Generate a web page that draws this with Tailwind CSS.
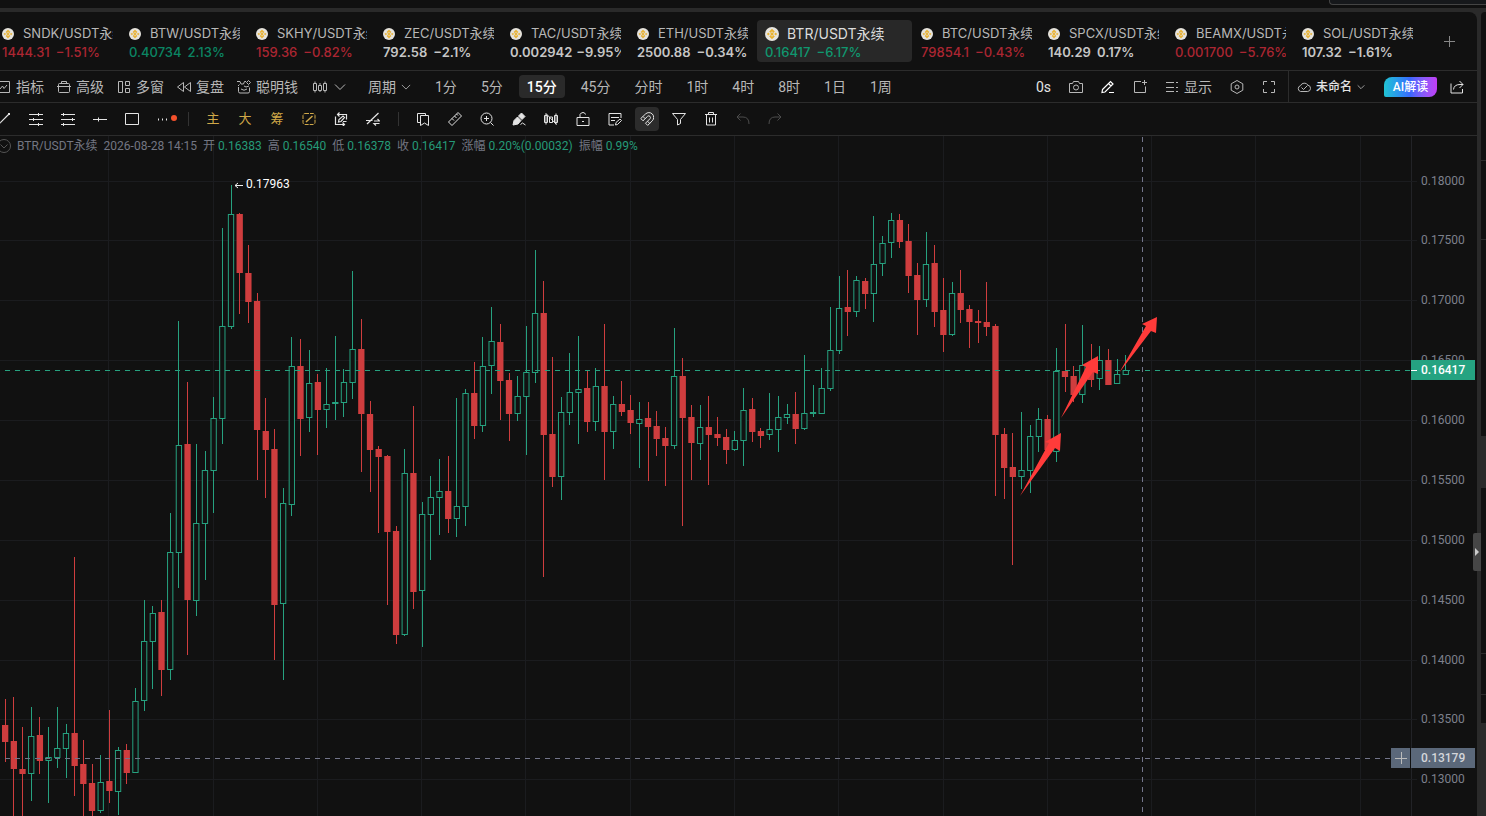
<!DOCTYPE html>
<html lang="zh-CN">
<head>
    <meta charset="UTF-8">
    <meta name="viewport" content="width=device-width, initial-scale=1.0">
    <title>BTR/USDT永续</title>
    <script src="https://cdn.jsdelivr.net/npm/@tailwindcss/browser@4"></script>
</head>
<body class="bg-[#2a2a2a] h-screen overflow-hidden flex flex-col font-['Roboto','Noto_Sans_CJK_SC',sans-serif] text-[#b8b8b8]">
    <svg class="hidden">
        <symbol id="coin" viewBox="0 0 14 14">
            <circle cx="7" cy="7" r="7" fill="#e6e4de"/>
            <path d="M7 2 9.600 4.600 8.500 5.700 7 4.200 5.500 5.700 4.400 4.600ZM7 12 9.600 9.400 8.500 8.300 7 9.800 5.500 8.300 4.400 9.400ZM2 7 3.300 5.700 4.600 7 3.300 8.300ZM12 7 10.700 5.700 9.400 7 10.700 8.300ZM7 5.300 8.700 7 7 8.700 5.300 7Z" fill="#e9b02a" stroke="#e9b02a" stroke-width=".3"/>
        </symbol>
        <symbol id="chevron" viewBox="0 0 12 12"><path d="M1 3.500 6 8.500 11 3.500" fill="none" stroke="currentColor"/></symbol>
    </svg>

    <!-- Window strip -->
    <div class="h-2 shrink-0 bg-[#101010] flex justify-end">
        <div class="w-[157px] h-[5px] bg-[#16181b] border-l border-b border-[#444] rounded-bl-sm"></div>
    </div>

    <div class="flex-1 min-h-0 pt-1 flex gap-1 relative">
        <main class="flex-1 min-w-0 bg-[#111] rounded-tr-lg flex flex-col overflow-hidden">
            <!-- Symbol tabs -->
            <nav class="h-[59px] shrink-0 border-b border-[#2c2c2c] flex items-center -ml-1.5 font-['Inter','Noto_Sans_CJK_SC',sans-serif] text-[13px] leading-[19px] whitespace-nowrap">
                <a href="#" class="w-[127px] shrink-0 px-2 pt-1"><span class="block overflow-hidden"><span class="flex items-center gap-[9px]"><svg class="size-3 shrink-0"><use href="#coin"/></svg>SNDK/USDT永续</span><span class="flex gap-1.5 font-medium text-[#ab2632]"><span>1444.31</span><span>−1.51%</span></span></span></a>
                <a href="#" class="w-[127px] shrink-0 px-2 pt-1"><span class="block overflow-hidden"><span class="flex items-center gap-[9px]"><svg class="size-3 shrink-0"><use href="#coin"/></svg>BTW/USDT永续</span><span class="flex gap-1.5 font-medium text-[#0b8563]"><span>0.40734</span><span>2.13%</span></span></span></a>
                <a href="#" class="w-[127px] shrink-0 px-2 pt-1"><span class="block overflow-hidden"><span class="flex items-center gap-[9px]"><svg class="size-3 shrink-0"><use href="#coin"/></svg>SKHY/USDT永续</span><span class="flex gap-1.5 font-medium text-[#ab2632]"><span>159.36</span><span>−0.82%</span></span></span></a>
                <a href="#" class="w-[127px] shrink-0 px-2 pt-1"><span class="block overflow-hidden"><span class="flex items-center gap-[9px]"><svg class="size-3 shrink-0"><use href="#coin"/></svg>ZEC/USDT永续</span><span class="flex gap-1.5 font-semibold text-[#c6c6c6]"><span>792.58</span><span>−2.1%</span></span></span></a>
                <a href="#" class="w-[127px] shrink-0 px-2 pt-1"><span class="block overflow-hidden"><span class="flex items-center gap-[9px]"><svg class="size-3 shrink-0"><use href="#coin"/></svg>TAC/USDT永续</span><span class="flex gap-1 font-semibold text-[#c6c6c6]"><span>0.002942</span><span>−9.95%</span></span></span></a>
                <a href="#" class="w-[127px] shrink-0 px-2 pt-1"><span class="block overflow-hidden"><span class="flex items-center gap-[9px]"><svg class="size-3 shrink-0"><use href="#coin"/></svg>ETH/USDT永续</span><span class="flex gap-1.5 font-semibold text-[#c6c6c6]"><span>2500.88</span><span>−0.34%</span></span></span></a>
                <a href="#" aria-current="page" class="w-[155px] h-[42px] mx-px shrink-0 px-2 rounded bg-[#282828] pt-1"><span class="flex items-center gap-2 text-sm leading-[19px] text-[#dcdcdc]"><svg class="size-3.5 shrink-0"><use href="#coin"/></svg>BTR/USDT永续</span><span class="flex gap-1.5 font-medium text-[#10976f]"><span>0.16417</span><span>−6.17%</span></span></a>
                <a href="#" class="w-[127px] shrink-0 px-2 pt-1"><span class="block overflow-hidden"><span class="flex items-center gap-[9px]"><svg class="size-3 shrink-0"><use href="#coin"/></svg>BTC/USDT永续</span><span class="flex gap-1.5 font-medium text-[#ab2632]"><span>79854.1</span><span>−0.43%</span></span></span></a>
                <a href="#" class="w-[127px] shrink-0 px-2 pt-1"><span class="block overflow-hidden"><span class="flex items-center gap-[9px]"><svg class="size-3 shrink-0"><use href="#coin"/></svg>SPCX/USDT永续</span><span class="flex gap-1.5 font-semibold text-[#c6c6c6]"><span>140.29</span><span>0.17%</span></span></span></a>
                <a href="#" class="w-[127px] shrink-0 px-2 pt-1"><span class="block overflow-hidden"><span class="flex items-center gap-[9px]"><svg class="size-3 shrink-0"><use href="#coin"/></svg>BEAMX/USDT永续</span><span class="flex gap-1.5 font-medium text-[#ab2632]"><span>0.001700</span><span>−5.76%</span></span></span></a>
                <a href="#" class="w-[127px] shrink-0 px-2 pt-1"><span class="block overflow-hidden"><span class="flex items-center gap-[9px]"><svg class="size-3 shrink-0"><use href="#coin"/></svg>SOL/USDT永续</span><span class="flex gap-1.5 font-semibold text-[#c6c6c6]"><span>107.32</span><span>−1.61%</span></span></span></a>
                <button class="ml-auto mr-[22px] size-[11px]" aria-label="添加"><svg class="size-[11px]" viewBox="0 0 11 11"><path d="M5.5 0v11M0 5.500h11" stroke="#888"/></svg></button>
            </nav>

            <!-- Chart toolbar -->
            <div class="h-8 shrink-0 border-b border-[#2c2c2c] flex items-center text-sm whitespace-nowrap">
                <div class="flex items-center gap-[13px] -ml-[3px]">
                    <button class="flex items-center gap-[5px]"><svg class="size-3.5" viewBox="0 0 14 14" fill="none" stroke="currentColor"><path d="M.5 1.500h12v11H.5ZM3 9l2.500-3 1.500 2.500L10 5"/></svg>指标</button>
                    <button class="flex items-center gap-[5px]"><svg class="size-3.5" viewBox="0 0 14 14" fill="none" stroke="currentColor"><path d="M2.500 3.500h9q1 0 1 1v7q0 1-1 1h-9q-1 0-1-1v-7q0-1 1-1ZM4.500 3.500v-2h5v2M0 6.500h14"/></svg>高级</button>
                    <button class="flex items-center gap-[5px]"><svg class="size-3.5" viewBox="0 0 14 14" fill="none" stroke="currentColor"><path d="M1.500 1.500h4v11h-4ZM8.500 1.500h4v4h-4ZM8.500 8.500h4v4h-4Z"/></svg>多窗</button>
                    <button class="flex items-center gap-[5px]"><svg class="size-3.5" viewBox="0 0 14 14" fill="none" stroke="currentColor"><path d="M6.500 2.500v9L.5 7ZM13.500 2.500v9L7.500 7Z"/></svg>复盘</button>
                    <button class="flex items-center gap-[5px]"><svg class="size-3.5" viewBox="0 0 14 14" fill="none" stroke="currentColor"><path d="M1.500 7v4.500q0 1.500 1.500 1.500h8q1.500 0 1.500-1.500V7.500M0 1.500h3l1 2.500h2.500l1-2.500H9M11.500.500 13.500 2.500 11.500 4.500 9.500 2.500ZM1 6l1.500-1.500M7 6l2 1 3-1M4 9q3 2.500 6 0"/></svg>聪明钱</button>
                    <button class="flex items-center gap-[7px] pl-0.5" aria-label="K线类型"><svg class="size-3.5" viewBox="0 0 14 14" fill="none" stroke="currentColor"><path d="M.5 3.500h3v7h-3ZM5.500 5.500h3v5h-3ZM10.500 3.500h3v7h-3ZM2 1.500v2M2 10.500v2M7 3v2.500M7 10.500V12M12 1.500v2M12 10.500v2"/></svg><svg class="size-3"><use href="#chevron"/></svg></button>
                </div>
                <div class="flex items-center gap-2 ml-3.5">
                    <button class="flex items-center gap-[5px] px-2">周期<svg class="size-2.5"><use href="#chevron"/></svg></button>
                    <button class="px-2">1分</button>
                    <button class="px-2">5分</button>
                    <button class="px-2 h-[23px] rounded bg-[#2a2a2a] text-white font-medium">15分</button>
                    <button class="px-2">45分</button>
                    <button class="px-2">分时</button>
                    <button class="px-2">1时</button>
                    <button class="px-2">4时</button>
                    <button class="px-2">8时</button>
                    <button class="px-2">1日</button>
                    <button class="px-2">1周</button>
                </div>
                <div class="ml-auto h-full flex items-center gap-[18px] pr-3 border-r border-[#2c2c2c]">
                    <span class="text-[#e4e4e4]">0s</span>
                    <button aria-label="截图"><svg class="size-3.5 block" viewBox="0 0 14 14" fill="none" stroke="currentColor"><path d="M.5 3.500h3l1-2h5l1 2h3v9H.5Z"/><circle cx="7" cy="7.500" r="2.500"/></svg></button>
                    <button aria-label="画线" class="text-white"><svg class="size-3.5 block" viewBox="0 0 14 14" fill="none" stroke="currentColor" stroke-width="1.200"><path d="M1.500 9.500 9.500 1.500l2.500 2.500-8 8-3 .5ZM7.500 3.500 10 6M8 12.500h5"/></svg></button>
                    <button aria-label="新建"><svg class="size-3.5 block" viewBox="0 0 14 14" fill="none" stroke="currentColor"><path d="M8 1.500H1.500v11h11V6.500M11.500 0v5M9 2.500h5"/></svg></button>
                    <button class="flex items-center gap-[5px]"><svg class="size-3.5" viewBox="0 0 14 14" fill="none" stroke="currentColor"><path d="M1 2.500h8M1 7.500h8M1 11.500h8M11 2.500h2M11 7.500h2M11 11.500h2"/></svg>显示</button>
                    <button aria-label="设置"><svg class="size-3.5 block" viewBox="0 0 14 14" fill="none" stroke="currentColor"><path d="M7 .5 12.800 3.800v6.400L7 13.500 1.200 10.200V3.800Z"/><circle cx="7" cy="7" r="2"/></svg></button>
                    <button aria-label="全屏"><svg class="size-3.5 block" viewBox="0 0 14 14" fill="none" stroke="currentColor"><path d="M1.500 5V1.500H5M9 1.500h3.500V5M12.500 9v3.500H9M5 12.500H1.500V9"/></svg></button>
                </div>
                <div class="flex items-center pl-2 pr-[13px]">
                    <button class="flex items-center gap-[5px] text-xs font-medium text-[#e4e4e4]"><svg class="size-3.5" viewBox="0 0 14 14" fill="none" stroke="#b8b8b8"><path d="M3.500 11.500a3 3 0 0 1 0-5.800 4.200 4.200 0 0 1 7.500-.5 3.200 3.200 0 0 1-.3 6.300ZM4.500 7.500l2 2 4-4"/></svg>未命名<svg class="size-2"><use href="#chevron"/></svg></button>
                    <button class="ml-[19px] w-[53px] h-5 rounded-tl-lg rounded-br-lg rounded-tr-xs rounded-bl-xs bg-linear-to-r from-[#22c3d2] via-[#3a66ff] to-[#c13cf5] text-white text-xs font-medium">AI解读</button>
                    <button class="ml-[13px] text-[#e4e4e4]" aria-label="分享"><svg class="size-3.5 block" viewBox="0 0 14 14" fill="none" stroke="currentColor"><path d="M1 3.500V13h11.500V9M3.500 9.500Q4 4.500 10 4.500H13M9.500 1l3.500 3.500L9.500 8"/></svg></button>
                </div>
            </div>

            <!-- Drawing toolbar -->
            <div class="h-[33px] shrink-0 border-b border-[#2c2c2c] flex items-center gap-2 -ml-2 text-[#e4e4e4] [&_button]:size-6 [&_button]:shrink-0 [&_button]:grid [&_button]:place-items-center [&_button]:rounded [&_svg]:size-3.5 [&_svg]:fill-none [&_svg]:stroke-current">
                <button aria-label="线段"><svg viewBox="0 0 14 14"><path d="M2 12 12 2" stroke-width="1.200"/><path d="M1 12h2M11 2h2" stroke-width="2"/></svg></button>
                <button aria-label="平行线"><svg viewBox="0 0 14 14"><path d="M0 2.500h14M0 7.500h14M0 12.500h14"/><path d="M9.500 1v3M4.500 6v3M9.500 11v3" /></svg></button>
                <button aria-label="通道"><svg viewBox="0 0 14 14"><path d="M0 2.500h14M0 7.500h14M0 12.500h14M2.500 1v3M11.500 6v3M2.500 11v3"/></svg></button>
                <button aria-label="水平线"><svg viewBox="0 0 14 14"><path d="M0 7.500h14M5.500 5.500v4"/></svg></button>
                <button aria-label="矩形"><svg viewBox="0 0 14 14"><path d="M.5 1.500h13v11H.5Z"/></svg></button>
                <button aria-label="更多" class="relative"><svg viewBox="0 0 14 14"><path d="M1 7.500h9" stroke-width="2" stroke-dasharray="1 3"/></svg><span class="absolute size-1.5 rounded-full bg-[#f4512c] top-2 -right-px"></span></button>
                <span class="w-[9px] shrink-0 flex justify-center"><span class="w-px h-3.5 bg-[#333]"></span></span>
                <button class="text-[13px] text-[#d0a848]">主</button>
                <button class="text-[13px] text-[#d0a848]">大</button>
                <button class="text-[13px] text-[#d0a848]">筹</button>
                <button class="text-[#d0a848]" aria-label="智能画线"><svg viewBox="0 0 14 14"><rect x="1" y="1.500" width="12" height="11" rx="2" stroke-dasharray="4 1"/><path d="M4 10 10.500 4" stroke-width="1.500"/></svg></button>
                <button aria-label="同步"><svg viewBox="0 0 14 14" stroke-width="1.200"><path d="M3.500 2.500h9v5M5.500.500l-2 2 2 2M10.500 12.500h-9v-8M8.500 10.500l2 2-2 2M4.500 10l.5-2.500L9 4l1.500 1.500-3.500 4ZM9 9.500h3.500"/></svg></button>
                <button aria-label="趋势"><svg viewBox="0 0 14 14" stroke-width="1.200"><path d="M1 12 12.500 1M0 8.500h6.500M8 9h5.500l-2-2M13.500 11.500H8l2 2"/></svg></button>
                <span class="w-2.5 shrink-0 flex justify-center"><span class="w-px h-3.5 bg-[#333]"></span></span>
                <button aria-label="书签"><svg viewBox="0 0 14 14"><path d="M4.500 3.500h8v10L8.500 11l-4 2.500ZM4 10.500H1.500v-9h8V3"/></svg></button>
                <button aria-label="测量"><svg viewBox="0 0 14 14"><path d="M.5 10 10 .5 13.500 4 4 13.500ZM4 6.500l2 2M6.500 4 8.500 6M8.500 2l1.500 1.500"/></svg></button>
                <button aria-label="放大"><svg viewBox="0 0 14 14"><circle cx="6.500" cy="6.500" r="5.500"/><path d="M10.500 10.500 13.500 13.500M6.500 4v5M4 6.500h5"/></svg></button>
                <button aria-label="画笔"><svg viewBox="0 0 14 14"><path d="M9.500 1 13 4.500 10 7.500 6.500 4ZM5.500 5 9 8.500 6 12 1 13 2 8.500Z" fill="currentColor"/><path d="M8.500 12.500l2-1.500 3 2"/></svg></button>
                <button aria-label="隐藏K线"><svg viewBox="0 0 14 14"><path d="M.5 3.500h3v7h-3ZM5.500 5v5.500h3V5ZM10.500 3.500h3v7h-3ZM2 1.500v11M12 1.500v11M2 1.500 12.500 12.500"/></svg></button>
                <button aria-label="解锁"><svg viewBox="0 0 14 14"><path d="M1 5.500h12v8H1ZM4 5.500v-3Q5 .5 7 .5T9.500 2.500M6 9.500h2"/></svg></button>
                <button aria-label="备注"><svg viewBox="0 0 14 14"><path d="M13 6V1.500H1v11.500h5M3 5.500h8M3 8.500h4M7.500 13l.5-2.500L12 7l1.500 1.500-4 4Z"/></svg></button>
                <button aria-label="磁吸" aria-pressed="true" class="bg-[#2c2c2c]"><svg viewBox="0 0 14 14"><path d="M.8 6.500 5.500 2a4.800 4.800 0 0 1 6.800 6.800L7.700 13.400 5.500 11.200 10 6.700a1.700 1.700 0 0 0-2.400-2.400L3 8.800ZM3 4.500l2.200 2.200M7.500 9.200l2.200 2.200"/></svg></button>
                <button aria-label="筛选"><svg viewBox="0 0 14 14"><path d="M.5 1.500h13L8.500 7.500v4L5.500 13V7.500Z"/></svg></button>
                <button aria-label="删除"><svg viewBox="0 0 14 14"><path d="M1 2.500h12M4.500 2.500v-2h5v2M2.500 2.500v10.500h9v-10.500M5.500 5.500v5M8.500 5.500v5"/></svg></button>
                <button aria-label="撤销" class="text-[#4c4c4c]"><svg viewBox="0 0 14 14"><path d="M4.500 1.500 1 5l3.500 3.500M1 5h6q6 0 6 7"/></svg></button>
                <button aria-label="重做" class="text-[#4c4c4c]"><svg viewBox="0 0 14 14"><path d="M9.500 1.500 13 5 9.500 8.500M13 5H7Q1 5 1 12"/></svg></button>
            </div>

            <!-- Chart -->
            <div class="flex-1 min-h-0 flex">
                <section class="flex-1 min-w-0 relative">
                    <svg id="pane" class="absolute inset-0 w-full h-full"></svg>
                    <div class="absolute left-0 top-0 h-5 flex items-center gap-1.5 text-xs text-[#737682] whitespace-nowrap">
                        <svg class="size-3.5 -ml-[3px]" viewBox="0 0 14 14" fill="none" stroke="#555"><circle cx="7" cy="7" r="6.500"/><path d="M3.500 5.500 7 9l3.500-3.500"/></svg>
                        <span>BTR/USDT永续</span>
                        <span>2026-08-28 14:15</span>
                        <span>开 <span class="text-[#259a78]">0.16383</span></span>
                        <span>高 <span class="text-[#259a78]">0.16540</span></span>
                        <span>低 <span class="text-[#259a78]">0.16378</span></span>
                        <span>收 <span class="text-[#259a78]">0.16417</span></span>
                        <span>涨幅 <span class="text-[#259a78]">0.20%(0.00032)</span></span>
                        <span>振幅 <span class="text-[#259a78]">0.99%</span></span>
                    </div>
                    <button class="absolute right-0 top-[612px] w-5 h-5 bg-[#5b687a] border-r border-[#111] grid place-items-center" aria-label="添加价格线"><svg class="size-3" viewBox="0 0 12 12"><path d="M6.500 0v12M0 6.500h12" stroke="#bbb"/></svg></button>
                </section>
                <aside class="w-[66px] shrink-0 relative">
                    <svg id="axis" class="w-full h-full block"></svg>
                    <div class="absolute left-0 top-[224px] w-16 h-5 bg-[#25a381] text-white text-xs font-medium flex items-center gap-1"><span class="w-1.5 h-px bg-white"></span>0.16417</div>
                    <div class="absolute left-0 top-[612px] w-16 h-5 bg-[#5b687a] text-[#d4d6da] text-xs font-medium flex items-center pl-2.5">0.13179</div>
                </aside>
            </div>
        </main>

        <!-- Edge of the side panel -->
        <aside class="w-[5px] shrink-0 flex flex-col">
            <div class="h-[149px] bg-[#111] rounded-tl-sm border-b border-[#2c2c2c]"></div>
            <div class="h-[79px] bg-[#111] border-b border-[#2c2c2c]"></div>
            <div class="h-[196px] bg-[#111]"></div>
            <div class="h-[52px]"></div>
            <div class="h-[166px] bg-[#111] border-b border-[#2c2c2c]"></div>
            <div class="h-[41px] bg-[#111] border-b border-[#2c2c2c]"></div>
            <div class="h-7 bg-[#111]"></div>
        </aside>
        <button class="absolute right-[5px] top-[525px] w-2 h-[38px] rounded-l-xs bg-[#464646] grid place-items-center" aria-label="展开侧栏"><svg class="w-1 h-2" viewBox="0 0 4 8"><path d="M0 0 4 4 0 8Z" fill="#ccc"/></svg></button>
    </div>

    <script>
        const UP = '#26a17f', DOWN = '#cf3d3e', GRID = '#1b1c1f';
        const TOP = 136, STEP = 8.687;

        // direction, high, body top, body bottom, low (screen rows)
        const candles = `
            d 699 725 742 762|d 697 741 769 830|d 727 769 774 830|u 707 736 774 801|d 717 735 761 774|u 727 757 761 803
            u 707 748 758 768|u 724 733 749 778|d 557 733 766 796|d 740 764 784 830|d 764 783 811 830|u 755 782 811 813
            d 710 781 791 803|u 747 750 792 815|d 744 750 773 784|u 688 701 773 773|u 600 641 701 711|u 606 613 642 689
            d 600 612 670 696|u 513 552 670 680|u 321 445 553 588|d 382 444 600 655|u 444 523 601 616|u 451 470 524 580
            u 397 418 471 513|u 228 326 419 444|u 185 214 327 329|d 213 214 273 314|d 245 273 302 323|d 293 301 430 480
            d 398 431 450 498|d 429 449 605 660|u 488 503 604 680|u 337 366 505 516|d 339 366 419 456|u 350 383 418 432
            d 374 382 410 455|u 368 404 410 428|u 336 402 404 420|u 369 382 403 417|u 271 349 383 399|d 319 349 414 472
            d 401 414 450 492|d 446 449 457 533|d 455 456 532 605|d 526 531 635 644|u 449 473 635 636|d 406 473 592 609
            u 502 514 591 647|u 476 497 515 560|u 459 491 498 535|d 456 491 519 533|u 398 506 519 537|u 389 393 507 526
            d 362 393 426 439|u 337 366 426 432|u 307 341 366 394|d 324 342 381 420|d 373 380 414 441|u 376 396 414 421
            u 326 372 397 455|u 250 313 373 383|d 281 313 435 577|d 357 434 477 487|u 397 412 477 500|u 353 392 413 425
            u 336 389 393 444|d 370 388 422 432|u 368 386 422 431|d 324 386 432 480|u 396 404 432 449|d 381 404 412 416
            d 395 410 423 434|u 402 419 424 468|d 402 418 427 481|d 411 426 439 456|d 427 438 446 486|u 328 376 446 449
            d 358 376 418 526|d 405 417 443 480|u 405 427 444 460|d 396 427 435 485|d 417 434 438 446|d 429 437 450 464
            u 431 440 450 451|u 388 410 441 466|d 398 409 432 442|d 428 431 436 448|u 393 429 435 440|u 396 417 430 452
            u 404 414 418 424|d 392 414 429 444|u 355 413 429 430|u 385 412 414 417|u 368 388 414 414|u 307 350 389 391
            u 276 308 351 354|d 270 307 312 336|u 276 280 312 317|d 278 281 294 309|u 216 264 294 322|u 236 243 264 276
            u 213 220 243 258|d 214 220 242 248|d 224 241 276 293|d 263 275 300 335|u 232 264 300 307|d 245 263 312 327
            d 278 310 335 352|u 282 293 335 336|d 270 293 310 323|d 305 309 322 348|d 310 321 323 343|d 282 322 327 336
            d 324 326 435 496|d 428 434 468 499|d 433 467 477 565|u 412 470 477 489|u 425 436 471 493|u 408 419 437 452
            d 415 419 450 452|u 348 371 452 462|d 324 371 377 392|d 366 376 395 402|u 325 365 395 403|d 344 362 380 387
            u 346 360 379 390|d 349 360 385 385|u 359 374 384 384|u 355 370 375 375`
            .trim().split(/[|\n]/).map(row => row.trim().split(' '));

        const line = (x1, y1, x2, y2, color, extra = '') =>
            `<line x1="${x1}" y1="${y1}" x2="${x2}" y2="${y2}" stroke="${color}" ${extra}/>`;

        const rows = [181, 240, 300, 360, 420, 480, 540, 600, 660, 719, 779];
        const cols = [108, 213, 317, 421, 525, 630, 734, 838, 943, 1047, 1151, 1255, 1360];
        let out = '';
        rows.forEach(y => out += line(0, y - TOP + .5, '100%', y - TOP + .5, GRID));
        cols.forEach(x => out += line(x + .5, 0, x + .5, '100%', GRID));

        candles.forEach(([dir, ...v], i) => {
            const [high, top, bottom, low] = v.map(n => n - TOP);
            const x = Math.floor(5.2 + STEP * i) + .5;
            const left = 2 + STEP * i;
            const color = dir === 'u' ? UP : DOWN;
            out += line(x, high, x, top, color) + line(x, bottom, x, low, color);
            out += dir === 'u'
                ? `<rect x="${(left + .5).toFixed(2)}" y="${top + .5}" width="5.3" height="${Math.max(bottom - top - 1, 1)}" fill="#111" stroke="${color}"/>`
                : `<rect x="${left.toFixed(2)}" y="${top}" width="6.3" height="${bottom - top}" fill="${color}"/>`;
        });

        // last price and crosshair
        out += line(5, 234.5, '100%', 234.5, UP, 'stroke-dasharray="5 5"');
        out += line(5, 622.5, '100%', 622.5, '#73758a', 'stroke-dasharray="5 5"');
        out += line(1142.5, 1, 1142.5, '100%', '#73758a', 'stroke-dasharray="5 5"');

        // highest price marker
        out += `<path d="M235 49.500h8M238 47l-3 2.500 3 2.500" stroke="#eee" fill="none"/>
            <text x="246" y="52" fill="#fff" font-size="12">0.17963</text>`;

        // arrow drawings
        out += `<g fill="#ff3b3a">
            <path d="M1061 297 1045 306 1049 307 1020 360 1055 312 1060 315Z"/>
            <path d="M1098 220 1082 229 1086 231 1061 282 1093 236 1098 238Z"/>
            <path d="M1157 181 1142 188 1146 190 1119 237 1151 195 1156 197Z"/></g>`;
        document.getElementById('pane').innerHTML = out;

        let axis = line(.5, 0, .5, '100%', '#222327');
        rows.forEach((y, i) => {
            axis += line(0, y - TOP + .5, 6, y - TOP + .5, GRID);
            axis += `<text x="10" y="${y - TOP + 4}" fill="#7d808c" font-size="12">${(0.18 - i * 0.005).toFixed(5)}</text>`;
        });
        document.getElementById('axis').innerHTML = axis;
    </script>
</body>
</html>
